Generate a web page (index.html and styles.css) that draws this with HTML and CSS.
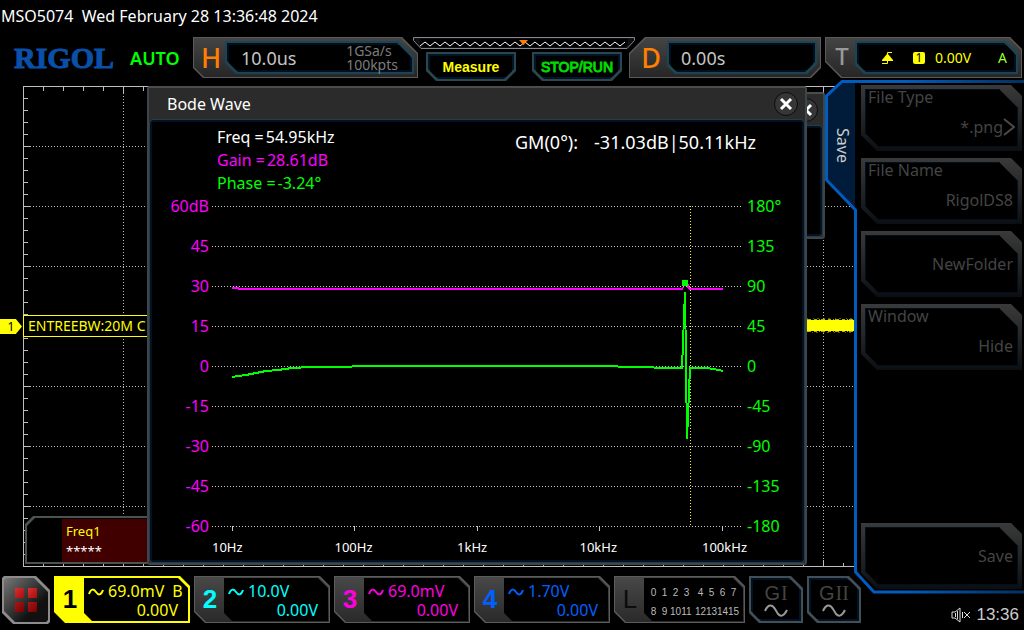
FILE: index.html
```html
<!DOCTYPE html>
<html lang="en">

<head>
    <meta charset="UTF-8">
    <meta name="viewport" content="width=device-width, initial-scale=1.0">
    <title>MSO5074</title>
    <link rel="stylesheet" href="styles.css">
</head>

<body>
    <div class="status">MSO5074&nbsp; Wed February 28 13:36:48 2024</div>

    <header class="toolbar">
        <div class="brand">
            <span class="logo">RIGOL</span>
            <span class="mode">AUTO</span>
        </div>
        <div class="block block-h cut">
            <span class="letter">H</span>
            <div class="screen cut">
                <span class="value">10.0us</span>
                <span class="rate">1GSa/s<br>100kpts</span>
            </div>
        </div>
        <div class="middle">
            <svg class="memory" viewBox="0 0 222 12" preserveAspectRatio="none">
                <path d="M.5 .5H221.5V3.5L214 11.5H8L.5 3.5Z" fill="#101014" stroke="#85858c" />
                <path d="M7 2H215V7L212 10H10L7 7Z" fill="#000" />
                <polyline id="zigzag" fill="none" stroke="#fff" />
                <path d="M106 3H115L110.5 8Z" fill="#ff7f00" />
            </svg>
            <div class="keys">
                <button class="key key-measure cut">Measure</button>
                <button class="key key-run cut">STOP/RUN</button>
            </div>
        </div>
        <div class="block block-d cut">
            <span class="letter">D</span>
            <div class="screen cut"><span class="value">0.00s</span></div>
        </div>
        <div class="block block-t cut">
            <span class="letter">T</span>
            <div class="screen cut">
                <svg width="13" height="14" viewBox="0 0 13 14">
                    <path d="M1 12.500H6.500V1.500H11" fill="none" stroke="#ff0" />
                    <path d="M1 10V9L6 3H7L12 9V10Z" fill="#ff0" />
                </svg>
                <span class="source">1</span>
                <span class="level">0.00V</span>
                <span class="sweep">A</span>
            </div>
        </div>
    </header>

    <div class="workspace">
        <main class="scope">
            <svg class="graticule" viewBox="0 80 1024 490" preserveAspectRatio="none" shape-rendering="crispEdges">
                <g fill="none" stroke="#bdbdbd">
                    <path d="M1024 86.5H23.5V566.5H1024" />
                    <path d="M23 88.500H1024M23 564.500H1024" stroke-width="4" stroke-dasharray="1 19" />
                    <path d="M23 90H1024M23 563H1024" stroke-width="7" stroke-dasharray="1 99" />
                    <path d="M26 86V566" stroke-width="4" stroke-dasharray="1 11" />
                    <path d="M27 86V566" stroke-width="7" stroke-dasharray="1 59" />
                    <path stroke-dasharray="1 2" d="M30 146.500H1024M30 206.500H1024M30 266.500H1024M30 326.500H1024M30 386.500H1024M30 446.500H1024M30 506.500H1024" />
                    <path stroke-dasharray="1 2" d="M123.500 93V560M223.500 93V560M823.500 93V560" />
                </g>
                <rect x="800" y="320" width="56" height="11" fill="#ff0" />
                <path d="M800 319.500H856M800 331.500H856" stroke="#b5b500" stroke-dasharray="3 2 1 1 4 3" />
                <path d="M802 318.500H856M801 332.500H856" stroke="#5c5c00" stroke-dasharray="1 3 2 5" />
                <rect x="148" y="86" width="3" height="3" fill="#f0f" />
            </svg>

            <div class="marker">1</div>
            <div class="trace-label">ENTREEBW:20M C</div>

            <div class="measure cut">
                <div class="measure-text">
                    <span class="measure-name">Freq1</span>
                    <span>*****</span>
                </div>
            </div>

            <section class="window window-back">
                <div class="titlebar">
                    <button class="close" aria-label="Close">
                        <svg width="14" height="14" viewBox="0 0 14 14"><path d="M2 2L12 12M12 2L2 12" /></svg>
                    </button>
                </div>
                <div class="window-body"></div>
            </section>

            <section class="window window-bode">
                <div class="titlebar">
                    <span>Bode Wave</span>
                    <button class="close" aria-label="Close">
                        <svg width="14" height="14" viewBox="0 0 14 14"><path d="M2 2L12 12M12 2L2 12" /></svg>
                    </button>
                </div>
                <div class="window-body">
                    <div class="readouts">
                        <div class="cursor-values">
                            <div>Freq =<span>54.95kHz</span></div>
                            <div class="gain">Gain =<span>28.61dB</span></div>
                            <div class="phase">Phase =<span>-3.24°</span></div>
                        </div>
                        <div class="margin-value"><span>GM(0°):</span><span>-31.03dB|50.11kHz</span></div>
                    </div>
                    <div class="plot">
                        <div class="axis axis-gain">
                            <span>60dB</span><span>45</span><span>30</span><span>15</span><span>0</span><span>-15</span><span>-30</span><span>-45</span><span>-60</span>
                        </div>
                        <svg class="curves" viewBox="0 0 530 340" preserveAspectRatio="none" fill="none">
                            <g stroke="#c8c8c8" shape-rendering="crispEdges">
                                <path stroke-dasharray="1 2" d="M0 10.500H530M0 50.500H530M0 90.500H530M0 130.500H530M0 170.500H530M0 210.500H530M0 250.500H530M0 290.500H530M0 330.500H530" />
                                <path d="M20.500 330V335M142.500 330V335M265.500 330V335M387.500 330V335M510.500 330V335" />
                            </g>
                            <path d="M478.500 10V330" stroke="#ff0" stroke-dasharray="1 2" shape-rendering="crispEdges" />
                            <g stroke-width="2" shape-rendering="crispEdges">
                                <path stroke="#f0f" d="M20 92H26L27 93H470L471 91M476 88V91L478 93H511" />
                                <path stroke="#0f0" d="M20 181L26 180L34 179L44 177L54 175L66 174L80 172L98 171L122 171L158 170H402L410 171H438L446 172H470L473 96L475 243L478 172H493L502 173L511 175" />
                            </g>
                            <rect x="470" y="84" width="6" height="6" fill="#0f0" />
                        </svg>
                        <div class="axis axis-phase">
                            <span>180°</span><span>135</span><span>90</span><span>45</span><span>0</span><span>-45</span><span>-90</span><span>-135</span><span>-180</span>
                        </div>
                        <div class="axis-freq">
                            <span>10Hz</span><span>100Hz</span><span>1kHz</span><span>10kHz</span><span>100kHz</span>
                        </div>
                    </div>
                </div>
            </section>
        </main>

        <footer class="channels">
            <button class="apps cut" aria-label="Apps"><i></i><i></i><i></i><i></i></button>
            <button class="channel ch1 cut">
                <span class="number">1</span>
                <span class="readout cut">
                    <span class="scale"><svg class="ac" viewBox="0 0 16 8"><path d="M1 6C3 0 6 1 8 4S13 8 15 2" /></svg>69.0mV <b>B</b></span>
                    <span class="offset">0.00V</span>
                </span>
            </button>
            <button class="channel ch2 cut">
                <span class="number">2</span>
                <span class="readout cut">
                    <span class="scale"><svg class="ac" viewBox="0 0 16 8"><path d="M1 6C3 0 6 1 8 4S13 8 15 2" /></svg>10.0V</span>
                    <span class="offset">0.00V</span>
                </span>
            </button>
            <button class="channel ch3 cut">
                <span class="number">3</span>
                <span class="readout cut">
                    <span class="scale"><svg class="ac" viewBox="0 0 16 8"><path d="M1 6C3 0 6 1 8 4S13 8 15 2" /></svg>69.0mV</span>
                    <span class="offset">0.00V</span>
                </span>
            </button>
            <button class="channel ch4 cut">
                <span class="number">4</span>
                <span class="readout cut">
                    <span class="scale"><svg class="ac" viewBox="0 0 16 8"><path d="M1 6C3 0 6 1 8 4S13 8 15 2" /></svg>1.70V</span>
                    <span class="offset">0.00V</span>
                </span>
            </button>
            <button class="channel logic cut">
                <span class="number">L</span>
                <span class="readout bits cut">
                    <span>0</span><span>1</span><span>2</span><span>3</span><i></i><span>4</span><span>5</span><span>6</span><span>7</span>
                    <span>8</span><span>9</span><span>10</span><span>11</span><i></i><span>12</span><span>13</span><span>14</span><span>15</span>
                </span>
            </button>
            <button class="generator cut">
                <span>G<b>I</b></span>
                <svg width="24" height="13" viewBox="0 0 24 13"><path d="M1 7C4 0 8 0 11 5L14 10C17 13 20 12 23 6" /></svg>
            </button>
            <button class="generator cut">
                <span>G<b>II</b></span>
                <svg width="24" height="13" viewBox="0 0 24 13"><path d="M1 7C4 0 8 0 11 5L14 10C17 13 20 12 23 6" /></svg>
            </button>
            <div class="clock">
                <svg width="19" height="16" viewBox="0 0 19 16" fill="none" stroke="#ddd">
                    <path d="M1 5H4L9 1V15L4 11H1Z" />
                    <path d="M6.500 4V12M4.500 6V10M11.500 5V11" />
                    <path d="M13 5L19 11M19 5L13 11" />
                </svg>
                <span>13:36</span>
            </div>
        </footer>

        <nav class="menu">
            <svg class="menu-frame" viewBox="0 0 199 514" preserveAspectRatio="none">
                <defs>
                    <linearGradient id="fade" x1="0" x2="1" y1="0" y2="0">
                        <stop offset="0.400" stop-color="#005cbd" />
                        <stop offset="1" stop-color="#06305f" />
                    </linearGradient>
                </defs>
                <path d="M199 1H17L1 16V100L31 130V492L49 513H199Z" fill="#000" />
                <path d="M30 2H17L1 16V100L30 129Z" fill="#001c3a" />
                <path d="M199 1.500H17L1.500 16V100L30.500 130V492L49 512H199" fill="none" stroke="url(#fade)" stroke-width="3" />
            </svg>
            <div class="menu-tab">Save</div>
            <div class="menu-items">
                <button class="item cut"><span>File Type</span>
                    <span class="item-value">*.png<svg width="12" height="18" viewBox="0 0 12 18"><path d="M1 1L11 9L1 17" fill="none" stroke="#4a4a4a" stroke-width="2" /></svg></span>
                </button>
                <button class="item cut"><span>File Name</span><span class="item-value pad">RigolDS8</span></button>
                <button class="item single cut"><span class="item-value pad">NewFolder</span></button>
                <button class="item cut"><span>Window</span><span class="item-value pad">Hide</span></button>
                <button class="item item-save single cut"><span class="item-value pad">Save</span></button>
            </div>
        </nav>
    </div>

    <script>
        // memory bar waveform
        let points = [];
        for (let x = 7; x <= 215; x += 5) {
            points.push(x + ',' + (points.length % 2 ? 5 : 9));
        }
        document.getElementById('zigzag').setAttribute('points', points.join(' '));
    </script>
</body>

</html>
```
FILE: styles.css
```css
* {
    box-sizing: border-box;
}

body {
    margin: 0;
    min-height: 100vh;
    display: flex;
    flex-direction: column;
    background: #000;
    color: #fff;
    font-family: "Noto Sans", sans-serif;
    font-size: 16px;
    overflow: hidden;
}

button {
    border: 0;
    padding: 0;
    margin: 0;
    background: none;
    color: inherit;
    font: inherit;
    text-align: left;
}

/* box with cut corners, the ::before is the inner face */
.cut {
    --tl: 0px;
    --tr: 0px;
    --br: 0px;
    --bl: 0px;
    position: relative;
    z-index: 0;
}

.cut,
.cut::before {
    clip-path: polygon(var(--tl) 0, calc(100% - var(--tr)) 0, 100% var(--tr), 100% calc(100% - var(--br)), calc(100% - var(--br)) 100%, var(--bl) 100%, 0 calc(100% - var(--bl)), 0 var(--tl));
}

.cut::before {
    content: "";
    position: absolute;
    inset: 1px;
    z-index: -1;
}

.status {
    height: 37px;
    line-height: 32px;
    padding-left: 1px;
}

/* top bar */
.toolbar {
    display: flex;
    align-items: flex-start;
    height: 43px;
    padding-right: 2px;
}

.brand {
    display: flex;
    align-items: center;
    gap: 16px;
    width: 193px;
    height: 42px;
    padding-left: 14px;
}

.logo {
    font: bold 30px "Liberation Serif", serif;
    color: #0a50a8;
    -webkit-text-stroke: 1px #0a50a8;
}

.mode {
    font-size: 18px;
    font-weight: 600;
    color: #0f0;
}

.block {
    display: flex;
    height: 41px;
    padding: 4px;
    background: #5a5a5a;
}

.block::before {
    background: linear-gradient(#444, #262626);
}

.block-h {
    flex: 1 0 225px;
    --tr: 16px;
    --bl: 10px;
}

.block-d {
    flex: 1 0 192px;
    --tl: 16px;
    --br: 10px;
}

.block-t {
    flex: 1 0 197px;
    margin-left: 4px;
    --tr: 12px;
    --bl: 16px;
}

.letter {
    width: 28px;
    line-height: 33px;
    text-align: center;
    font-size: 27px;
    font-weight: 500;
    color: #ff7f00;
}

.block-d .letter {
    width: 34px;
    padding-left: 2px;
}

.block-t .letter {
    width: 26px;
    font-size: 24px;
    line-height: 30px;
    color: #999;
}

.screen {
    flex: 1;
    display: flex;
    align-items: center;
    padding: 0 16px;
    background: #1c4454;
}

.screen::before {
    inset: 2px;
    background: linear-gradient(#000, #000) center / calc(100% - 4px) calc(100% - 4px) no-repeat #00101f;
}

.block-h .screen {
    --tr: 15px;
    --bl: 11px;
    justify-content: space-between;
}

.block-d .screen {
    --bl: 8px;
    --br: 10px;
    padding-left: 14px;
}

.block-t .screen {
    --tr: 12px;
    --bl: 9px;
    padding: 0 11px 0 26px;
    font-size: 14px;
    color: #ff0;
}

.value {
    font-size: 18px;
    color: #c4c4c4;
}

.rate {
    font-size: 14px;
    line-height: 14px;
    color: #7c7c7c;
}

.source {
    width: 12px;
    margin-left: 19px;
    border-radius: 2px;
    background: #ff0;
    color: #000;
    font-size: 12px;
    line-height: 12px;
    text-align: center;
}

.level {
    margin-left: 10px;
}

.sweep {
    margin-left: auto;
    color: #9f3;
}

.middle {
    flex: 1 0 222px;
    margin: 0 -6px 0 -5px;
    position: relative;
    z-index: 1;
}

.memory {
    display: block;
    width: 100%;
    height: 12px;
}

.keys {
    display: flex;
    justify-content: space-between;
    margin-top: 3px;
    padding: 0 13px;
}

.key {
    --bl: 10px;
    --br: 10px;
    width: 90px;
    height: 29px;
    background: #2c4650;
    font: bold 14px "Liberation Sans", sans-serif;
    text-align: center;
}

.key::before {
    inset: 2px;
    background: linear-gradient(#000, #000) center / calc(100% - 4px) calc(100% - 4px) no-repeat #001626;
}

.key-measure {
    color: #ff0;
}

.key-run {
    color: #0f0;
    font-weight: 400;
    -webkit-text-stroke: 1px #00d800;
}

/* scope screen */
.workspace {
    flex: 1;
    display: flex;
    flex-direction: column;
    position: relative;
}

.scope {
    flex: 1;
    min-height: 490px;
    position: relative;
}

.graticule {
    position: absolute;
    width: 100%;
    height: 100%;
}

.marker {
    position: absolute;
    top: 239px;
    left: 0;
    width: 22px;
    height: 15px;
    background: #ff0;
    color: #000;
    font-size: 12px;
    line-height: 15px;
    text-align: center;
    clip-path: polygon(0 0, 72% 0, 100% 50%, 72% 100%, 0 100%);
}

.trace-label {
    position: absolute;
    top: 235px;
    left: 23px;
    width: 140px;
    padding-left: 4px;
    border: 1px solid #ff0;
    background: #000;
    color: #ff0;
    font-size: 14px;
    line-height: 20px;
    white-space: nowrap;
}

.measure {
    --tl: 8px;
    position: absolute;
    top: 436px;
    left: 25px;
    width: 140px;
    padding: 3px 0 2px 37px;
    background: #4a5254;
}

.measure::before {
    inset: 2px;
    background: #000;
}

.measure-text {
    display: flex;
    flex-direction: column;
    padding: 2px 4px 1px;
    background: #400000;
    font-size: 13px;
    line-height: 20px;
}

.measure-name {
    color: #ff0;
}

/* windows */
.window {
    position: absolute;
    display: flex;
    flex-direction: column;
    border: 2px solid #3b464a;
    border-top-color: #4c4c4c;
    border-radius: 3px;
    background: #2b2b2b;
}

.window-back {
    top: 12px;
    right: 199px;
    width: 200px;
    height: 147px;
}

.window-bode {
    top: 6px;
    left: 147px;
    right: 217px;
    bottom: 5px;
}

.titlebar {
    display: flex;
    justify-content: space-between;
    align-items: center;
    height: 31px;
    padding: 0 7px 0 18px;
}

.window-back .titlebar {
    padding-right: 5px;
}

.window-back .close {
    margin-left: auto;
}

.close {
    display: flex;
    align-items: center;
    justify-content: center;
    width: 24px;
    height: 24px;
    border: 1px solid #0c0c0c;
    border-radius: 50%;
    background: #363636;
}

.close svg {
    flex: none;
}

.close path {
    stroke: #fff;
    stroke-width: 3;
}

.window-body {
    flex: 1;
    margin: 1px 1px 1px;
    padding: 4px 17px 0;
    border: 2px solid #001226;
    outline: 1px solid #303a3e;
    border-radius: 3px;
    background: #000;
}

.readouts {
    display: flex;
    justify-content: space-between;
    padding: 0 29px 0 48px;
    line-height: 23px;
}

.cursor-values {
    height: 70px;
}

.cursor-values span {
    padding-left: 2px;
}

.margin-value {
    display: flex;
    gap: 16px;
    font-size: 18px;
    line-height: 32px;
}

.gain,
.axis-gain {
    color: #f0f;
}

.phase,
.axis-phase {
    color: #0f0;
}

.plot {
    display: grid;
    grid-template-columns: 40px 1fr 40px;
    column-gap: 3px;
}

.axis {
    display: flex;
    flex-direction: column;
    gap: 20px;
    line-height: 20px;
}

.axis-gain {
    text-align: right;
}

.axis-phase {
    padding-left: 2px;
}

.curves {
    width: 100%;
    height: 340px;
}

.axis-freq {
    grid-column: 2;
    display: grid;
    grid-template-columns: repeat(4, 1fr) 40px;
    font-size: 13px;
    line-height: 22px;
}

/* bottom bar */
.channels {
    display: flex;
    align-items: flex-start;
    gap: 4px;
    height: 60px;
    padding: 6px 5px 0 2px;
}

.apps {
    --tr: 14px;
    --bl: 11px;
    --tl: 2px;
    --br: 2px;
    display: grid;
    grid-template-columns: 9px 9px;
    grid-template-rows: 10px 10px;
    gap: 4px;
    place-content: center;
    width: 48px;
    height: 48px;
    background: #8c8c8c;
}

.apps::before {
    inset: 2px;
    background: linear-gradient(135deg, #777, #111 70%);
}

.apps i {
    background: linear-gradient(135deg, #d83030, #a80c0c);
}

.apps i:nth-child(n+3) {
    background: linear-gradient(135deg, #a81818, #780000);
}

.channel {
    --tr: 10px;
    --bl: 11px;
    display: flex;
    width: 136px;
    height: 47px;
    padding: 2px;
    background: #5c5c5c;
}

.channel::before {
    background: linear-gradient(#484848, #2a2a2a);
}

.number {
    width: 28px;
    font: bold 26px/42px "Liberation Sans", sans-serif;
    text-align: center;
}

.readout {
    --tr: 10px;
    --bl: 8px;
    flex: 1;
    background: #000;
    line-height: 19px;
    padding-top: 4px;
}

.scale {
    display: flex;
    align-items: center;
    white-space: nowrap;
}

.scale b {
    margin-left: 8px;
    font-weight: 400;
}

.offset {
    display: block;
    padding-right: 10px;
    text-align: right;
}

.ac {
    width: 16px;
    height: 8px;
    margin: 0 4px;
    fill: none;
    stroke: currentColor;
    stroke-width: 2;
    overflow: visible;
}

.ch1 {
    background: #ff0;
    color: #ff0;
}

.ch1::before {
    background: #ff0;
}

.ch1 .number {
    color: #000;
}

.ch2 {
    color: #0ff;
}

.ch3 {
    color: #ff00e0;
}

.ch4 {
    color: #0060ff;
}

.logic {
    width: 131px;
}

.logic .number {
    color: #0c0c0c;
    font-weight: 400;
}

.bits {
    display: grid;
    grid-template-columns: repeat(4, 11px) 3px repeat(4, 11px);
    padding: 6px 0 0 4px;
    color: #bbb;
    font: 10px/17px "Liberation Sans", sans-serif;
    text-align: center;
}

.generator {
    --tr: 12px;
    --bl: 10px;
    width: 54px;
    height: 47px;
    background: #434f54;
    color: #444;
    font: 20px/22px "Liberation Sans", sans-serif;
    text-align: center;
}

.generator::before {
    inset: 2px;
    background: linear-gradient(#000, #000) center / calc(100% - 4px) calc(100% - 4px) no-repeat #001226;
}

.generator span {
    display: block;
}

.generator b {
    padding-left: 1px;
    font-family: "Liberation Serif", serif;
    font-weight: 400;
}

.generator svg {
    display: block;
    margin: 0 auto;
    fill: none;
    stroke: #999;
    stroke-width: 2;
}

.clock {
    display: flex;
    align-items: center;
    align-self: flex-end;
    gap: 6px;
    height: 30px;
    margin-left: auto;
    color: #ccc;
    font: 17px "Liberation Sans", sans-serif;
}

/* side menu */
.menu {
    position: absolute;
    z-index: 2;
    top: 0;
    right: 0;
    bottom: 36px;
    width: 199px;
    display: flex;
}

.menu-frame {
    position: absolute;
    width: 100%;
    height: 100%;
    z-index: -1;
}

.menu-tab {
    width: 36px;
    height: 130px;
    line-height: 36px;
    text-align: center;
    writing-mode: vertical-rl;
    color: #ccc;
}

.menu-items {
    flex: 1;
    display: flex;
    flex-direction: column;
    gap: 7px;
    padding: 5px 2px 5px 0;
}

.item {
    --tr: 11px;
    --bl: 16px;
    display: flex;
    flex-direction: column;
    justify-content: space-between;
    height: 66px;
    padding: 0 7px 12px;
    background: linear-gradient(#3a3a3a, #0c0f12);
    color: #444;
    line-height: 24px;
}

.item::before {
    --tr: 19px;
    --bl: 14px;
    inset: 4px;
    background: #000;
    border: 1px solid #00101f;
}

.item-value {
    display: flex;
    align-items: center;
    align-self: flex-end;
}

.pad {
    padding-right: 2px;
}

.single {
    justify-content: center;
    padding-bottom: 0;
}

.item-save {
    margin-top: auto;
}
```
